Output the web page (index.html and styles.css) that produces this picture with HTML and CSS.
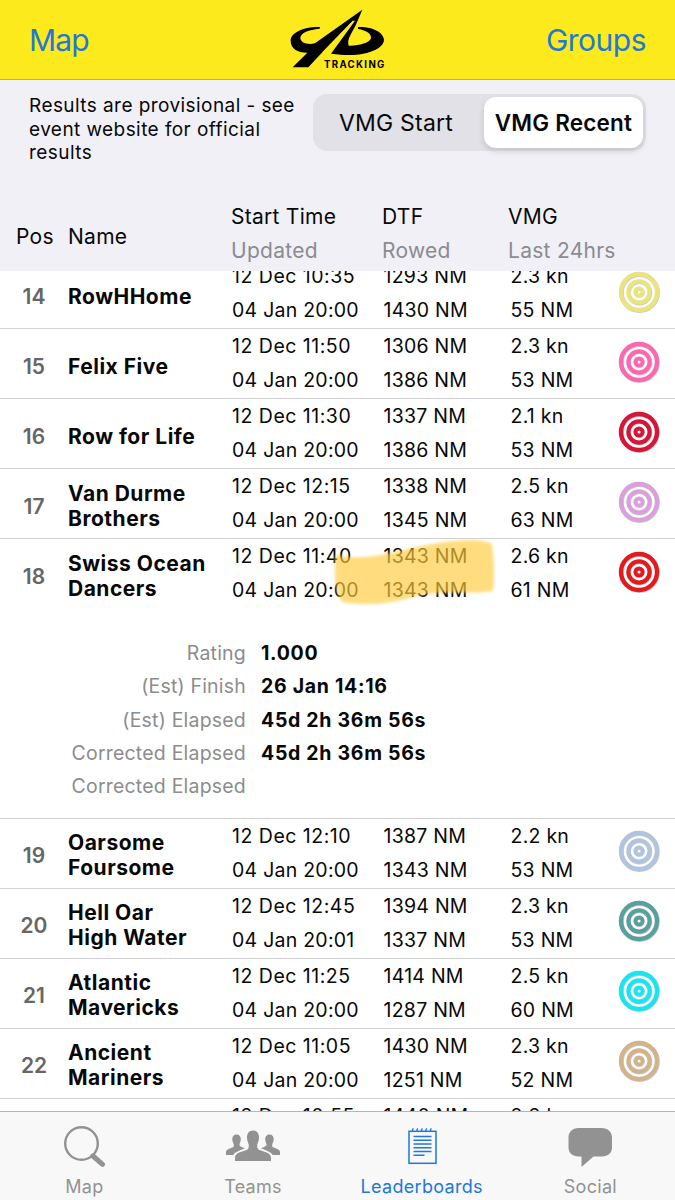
FILE: index.html
```html
<!DOCTYPE html>
<html lang="en">
<head>
  <meta charset="utf-8">
  <title>Leaderboards</title>
  <link rel="stylesheet" href="styles.css">
</head>
<body>
  <!-- shared marker icon -->
  <svg class="defs" width="0" height="0">
    <symbol id="target" viewBox="0 0 42 42">
      <g fill="none" stroke="#777" stroke-opacity="0.4">
        <circle cx="21.5" cy="21.7" r="18" stroke-width="4.6"/>
        <circle cx="21.5" cy="21.7" r="10.8" stroke-width="4"/>
        <circle cx="21.4" cy="21.5" r="3.6" stroke-width="3.4"/>
      </g>
      <g fill="none" stroke="currentColor">
        <circle cx="21" cy="21" r="18" stroke-width="4.4"/>
        <circle cx="21" cy="21" r="10.6" stroke-width="4.2"/>
        <circle cx="21" cy="21" r="3.6" stroke-width="4"/>
      </g>
    </symbol>
  </svg>

  <div class="app">
    <header class="navbar">
      <a class="nav-link nav-map">Map</a>
      <svg class="logo" width="100" height="66" viewBox="54 21 300 198">
        <path d="M150 81C100 80 62 98 62 122C62 146 82 158 112 158L68 202H115L157 157L248 62L255 62L183 161C215 165 250 167 276 162C318 154 342 138 342 119C340 94 302 79 264 81V87C290 91 305 102 303 115C299 129 266 138 236 137C230 119 244 102 257 76L277 29L135 130C112 135 92 129 91 114C92 98 116 89 149 86Z"/>
        <path class="logo-gap" d="M251 61L157 157L184 158Q205 117 251 61Z"/>
        <text x="162" y="203" textLength="181">TRACKING</text>
      </svg>
      <a class="nav-link nav-groups">Groups</a>
    </header>

    <section class="panel">
      <div class="panel-top">
        <p class="notice">Results are provisional - see<br>event website for official<br>results</p>
        <div class="segmented">
          <div class="segment">VMG Start</div>
          <div class="segment active">VMG Recent</div>
        </div>
      </div>
      <div class="columns">
        <div class="head-pos">Pos</div>
        <div class="head-name">Name</div>
        <div class="head"><span>Start Time</span><span class="sub">Updated</span></div>
        <div class="head"><span>DTF</span><span class="sub">Rowed</span></div>
        <div class="head"><span>VMG</span><span class="sub">Last 24hrs</span></div>
      </div>
    </section>

    <main class="list">
      <div class="row first">
        <div class="pos">14</div>
        <div class="name">RowHHome</div>
        <div class="cell time"><span>12 Dec 10:35</span><span>04 Jan 20:00</span></div>
        <div class="cell"><span>1293 NM</span><span>1430 NM</span></div>
        <div class="cell"><span>2.3 kn</span><span>55 NM</span></div>
        <svg class="target khaki"><use href="#target"/></svg>
      </div>
      <div class="row">
        <div class="pos">15</div>
        <div class="name">Felix Five</div>
        <div class="cell time"><span>12 Dec 11:50</span><span>04 Jan 20:00</span></div>
        <div class="cell"><span>1306 NM</span><span>1386 NM</span></div>
        <div class="cell"><span>2.3 kn</span><span>53 NM</span></div>
        <svg class="target pink"><use href="#target"/></svg>
      </div>
      <div class="row">
        <div class="pos">16</div>
        <div class="name">Row for Life</div>
        <div class="cell time"><span>12 Dec 11:30</span><span>04 Jan 20:00</span></div>
        <div class="cell"><span>1337 NM</span><span>1386 NM</span></div>
        <div class="cell"><span>2.1 kn</span><span>53 NM</span></div>
        <svg class="target crimson"><use href="#target"/></svg>
      </div>
      <div class="row">
        <div class="pos">17</div>
        <div class="name">Van Durme<br>Brothers</div>
        <div class="cell time"><span>12 Dec 12:15</span><span>04 Jan 20:00</span></div>
        <div class="cell"><span>1338 NM</span><span>1345 NM</span></div>
        <div class="cell"><span>2.5 kn</span><span>63 NM</span></div>
        <svg class="target plum"><use href="#target"/></svg>
      </div>
      <div class="row open">
        <div class="pos">18</div>
        <div class="name">Swiss Ocean<br>Dancers</div>
        <div class="cell time"><span>12 Dec 11:40</span><span>04 Jan 20:00</span></div>
        <div class="cell"><span>1343 NM</span><span>1343 NM</span></div>
        <div class="cell"><span>2.6 kn</span><span>61 NM</span></div>
        <svg class="target red"><use href="#target"/></svg>
        <!-- marker pen stroke over the distances -->
        <svg class="highlight" width="172" height="76" viewBox="0 0 172 76">
          <path d="M7 20C25 24 42 22 58 19C85 13 110 6 140 5C150 5 160 6 164 9C166 25 167 42 165 56C140 60 110 54 82 63C60 69 36 71 14 67C6 58 7 38 7 20Z"/>
        </svg>
      </div>
      <dl class="details">
        <dt>Rating</dt><dd>1.000</dd>
        <dt>(Est) Finish</dt><dd>26 Jan 14:16</dd>
        <dt>(Est) Elapsed</dt><dd>45d 2h 36m 56s</dd>
        <dt>Corrected Elapsed</dt><dd>45d 2h 36m 56s</dd>
        <dt>Corrected Elapsed</dt><dd></dd>
      </dl>
      <div class="row">
        <div class="pos">19</div>
        <div class="name">Oarsome<br>Foursome</div>
        <div class="cell time"><span>12 Dec 12:10</span><span>04 Jan 20:00</span></div>
        <div class="cell"><span>1387 NM</span><span>1343 NM</span></div>
        <div class="cell"><span>2.2 kn</span><span>53 NM</span></div>
        <svg class="target steel"><use href="#target"/></svg>
      </div>
      <div class="row">
        <div class="pos">20</div>
        <div class="name">Hell Oar<br>High Water</div>
        <div class="cell time"><span>12 Dec 12:45</span><span>04 Jan 20:01</span></div>
        <div class="cell"><span>1394 NM</span><span>1337 NM</span></div>
        <div class="cell"><span>2.3 kn</span><span>53 NM</span></div>
        <svg class="target teal"><use href="#target"/></svg>
      </div>
      <div class="row">
        <div class="pos">21</div>
        <div class="name">Atlantic<br>Mavericks</div>
        <div class="cell time"><span>12 Dec 11:25</span><span>04 Jan 20:00</span></div>
        <div class="cell"><span>1414 NM</span><span>1287 NM</span></div>
        <div class="cell"><span>2.5 kn</span><span>60 NM</span></div>
        <svg class="target cyan"><use href="#target"/></svg>
      </div>
      <div class="row">
        <div class="pos">22</div>
        <div class="name">Ancient<br>Mariners</div>
        <div class="cell time"><span>12 Dec 11:05</span><span>04 Jan 20:00</span></div>
        <div class="cell"><span>1430 NM</span><span>1251 NM</span></div>
        <div class="cell"><span>2.3 kn</span><span>52 NM</span></div>
        <svg class="target tan"><use href="#target"/></svg>
      </div>
      <div class="row">
        <div class="pos"></div>
        <div class="name"></div>
        <div class="cell time"><span>12 Dec 10:55</span></div>
        <div class="cell"><span>1440 NM</span></div>
        <div class="cell"><span>2.2 kn</span></div>
      </div>
    </main>

    <nav class="tabbar">
      <a class="tab">
        <svg width="44" height="44" viewBox="0 0 44 44">
          <circle cx="19.5" cy="18.5" r="16.3" fill="none" stroke="#929292" stroke-width="2.4"/>
          <path d="M31 31L40.5 39.3" stroke="#929292" stroke-width="5" stroke-linecap="round"/>
        </svg>
        <span>Map</span>
      </a>
      <a class="tab">
        <svg width="56" height="44" viewBox="0 0 56 44" fill="#929292">
          <path d="M28 5.5C32 5.5 34.2 8.6 34 13C33.8 16.5 32.6 18 32.2 20C32 24 33.4 24.7 36 25.5C42 27.5 46 28.5 46 33V36H10V33C10 28.5 14 27.5 20 25.5C22.6 24.7 24 24 23.8 20C23.4 18 22.2 16.5 22 13C21.8 8.6 24 5.5 28 5.5Z"/>
          <path id="side" d="M11.5 9.5C14.5 9.5 16 11.5 15.8 14.5C15.6 17 14.6 18 14.5 19.5C14.5 21.5 17 22 20 23.2C15 25.5 10.5 26.5 8.3 30H1V27C1 24 6 23.2 8 22.2C9.2 21.5 8.9 20 8.6 18.8C8.2 17.8 7.4 16.5 7.3 14.5C7.2 11.5 8.5 9.5 11.5 9.5Z"/>
          <use href="#side" transform="matrix(-1 0 0 1 56 0)"/>
        </svg>
        <span>Teams</span>
      </a>
      <a class="tab selected">
        <svg width="30" height="44" viewBox="0 0 30 44" fill="none" stroke="#2176e0">
          <rect x="2" y="6.3" width="27" height="32" stroke-width="1.5"/>
          <path d="M5.5 7V4.5L6.5 3.5M10 7V4.5L11 3.5M14.5 7V4.5L15.5 3.5M19 7V4.5L20 3.5M23.5 7V4.5L24.5 3.5" stroke-width="1.3"/>
          <path d="M6.5 11.5H24.500M6.500 15.200H24.500M6.500 19H24.500M6.500 22.800H24.500M6.500 26.500H24.500M6.500 30.300H17.500" stroke-width="1.400"/>
        </svg>
        <span>Leaderboards</span>
      </a>
      <a class="tab">
        <svg width="44" height="44" viewBox="0 0 44 44">
          <path d="M10.5 3H33.5C40 3 44 7 44 12.5V22.5C44 28 40 31.5 34 31.5H25.5L13.5 42V31.5H10.5C4.5 31.5 .5 28 .5 22.5V12.5C.5 7 4.5 3 10.5 3Z" fill="#929292"/>
        </svg>
        <span>Social</span>
      </a>
    </nav>
  </div>
</body>
</html>
```
FILE: styles.css
```css
* {
  box-sizing: border-box;
}

body {
  margin: 0;
  font-family: Inter, "Liberation Sans", sans-serif;
  color: #080808;
  background-color: #fff;
}

.defs {
  position: absolute;
}

.app {
  width: 675px;
  height: 1200px;
  display: flex;
  flex-direction: column;
  overflow: hidden;
}

/* Yellow navigation bar */
.navbar {
  flex: none;
  height: 80px;
  padding: 7px 29px 0;
  display: grid;
  grid-template-columns: 259px 100px 1fr;
  background-color: #fdea1d;
  border-bottom: 1px solid #b5ad70;
}

.nav-link {
  color: #2078d8;
  font-size: 30px;
  line-height: 66px;
  letter-spacing: -0.9px;
}

.nav-groups {
  text-align: right;
  letter-spacing: -0.5px;
}

.logo text {
  font-size: 29px;
  font-weight: 700;
}

.logo-gap {
  fill: #fdea1d;
}

/* Notice, switch and column titles */
.panel {
  flex: none;
  height: 191px;
  background-color: #f1f0f6;
}

.panel-top {
  height: 116px;
  padding: 14px 29px 0;
  display: flex;
  justify-content: space-between;
}

.notice {
  margin: 0;
  font-size: 19px;
  line-height: 23.5px;
  letter-spacing: 0.43px;
  white-space: nowrap;
}

.segmented {
  width: 333px;
  height: 57px;
  padding: 3px;
  display: flex;
  border-radius: 14px;
  background-color: #e2e1e7;
}

.segment {
  width: 168px;
  padding-right: 8px;
  line-height: 52px;
  font-size: 23px;
  letter-spacing: 0.2px;
  text-align: center;
  white-space: nowrap;
}

.segment.active {
  width: 159px;
  padding-right: 0;
  line-height: 51px;
  font-weight: 600;
  font-size: 22.5px;
  background-color: #fff;
  border-radius: 12px;
  box-shadow: 0 3px 6px rgba(0, 0, 0, 0.14);
}

.columns {
  display: grid;
  grid-template-columns: 52px 163px 151px 126px 1fr;
  padding-left: 16px;
  font-size: 21px;
  letter-spacing: 0.27px;
}

.head-pos,
.head-name {
  line-height: 81px;
}

.head span {
  display: block;
  line-height: 34px;
  padding-top: 4px;
}

.head .sub {
  padding-top: 0;
  color: #8b8b90;
}

/* Leaderboard rows */
.list {
  flex: 1;
  min-height: 0;
  overflow: hidden;
}

.row {
  position: relative;
  height: 70px;
  display: grid;
  grid-template-columns: 68px 164px 151.5px 127px 108px 42px;
  border-bottom: 1px solid #d2d2d4;
}

.row.first {
  margin-top: -12px;
}

.row.open {
  border-bottom: none;
}

.pos {
  padding-top: 4px;
  line-height: 67px;
  text-align: center;
  font-size: 21px;
  font-weight: 600;
  color: #666;
}

.name {
  display: flex;
  align-items: center;
  padding-top: 3px;
  font-size: 21px;
  font-weight: 700;
  line-height: 25px;
  letter-spacing: 0.5px;
}

.cell {
  font-size: 19.5px;
  letter-spacing: 0.25px;
}

.cell span {
  display: block;
  line-height: 34px;
  white-space: nowrap;
}

.time span:first-child {
  letter-spacing: 0.5px;
}

.target {
  width: 42px;
  height: 42px;
  margin: 12px 0 0 -1px;
}

/* Rows below the expanded entry sit slightly higher */
.details ~ .row .pos {
  padding-top: 3px;
}

.details ~ .row .name {
  padding-top: 1px;
}

.details ~ .row .target {
  margin-top: 11px;
}

.khaki { color: #ebe37e; }
.pink { color: #fb68b1; }
.crimson { color: #d51638; }
.plum { color: #d9a0dc; }
.red { color: #e21b1f; }
.steel { color: #b0c4de; }
.teal { color: #5a9f9f; }
.cyan { color: #18e5f1; }
.tan { color: #d2b48c; }

.highlight {
  position: absolute;
  left: 328px;
  top: -4px;
  fill: #ffcb3c;
  opacity: 0.66;
  filter: blur(1.8px);
}

/* Expanded entry */
.details {
  height: 210px;
  margin: 0;
  padding-top: 28px;
  display: grid;
  grid-template-columns: 246px 1fr;
  grid-auto-rows: 33.3px;
  column-gap: 15px;
  line-height: 33px;
  font-size: 19.5px;
  letter-spacing: 0.2px;
  border-bottom: 1px solid #d2d2d4;
}

.details dt {
  text-align: right;
  color: #8c8c8c;
}

.details dd {
  margin: 0;
  font-weight: 700;
  letter-spacing: 0.7px;
}

/* Bottom tabs */
.tabbar {
  flex: none;
  height: 89px;
  padding-top: 13px;
  display: grid;
  grid-template-columns: repeat(4, 168.7px);
  background-color: #f8f8f8;
  border-top: 1px solid #b4b4b4;
}

.tab {
  display: flex;
  flex-direction: column;
  align-items: center;
  color: #929292;
  font-size: 18px;
  line-height: 36px;
  letter-spacing: 0.3px;
}

.tab.selected {
  color: #2176e0;
}
```
